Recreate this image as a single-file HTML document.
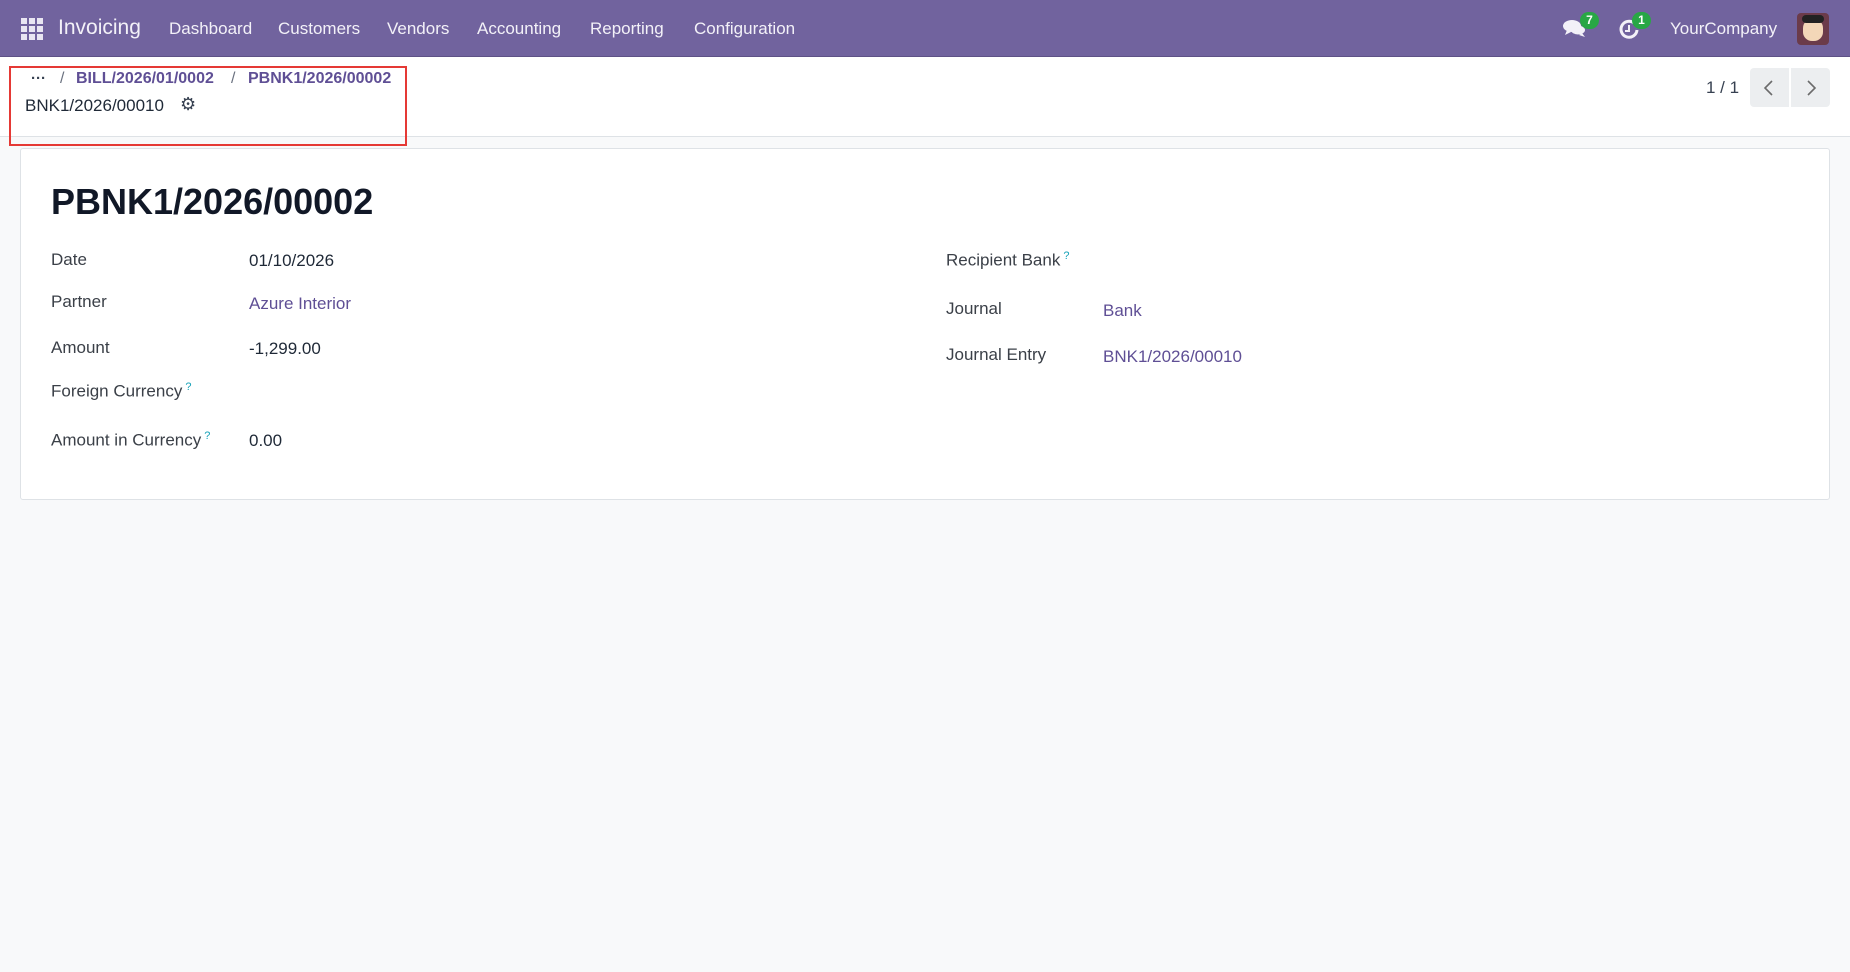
<!DOCTYPE html>
<html><head><meta charset="utf-8"><style>
*{box-sizing:border-box;margin:0;padding:0}
body{width:1850px;height:972px;background:#f8f9fa;font-family:"Liberation Sans",sans-serif;color:#374151;position:relative;overflow:hidden}
.nav{position:absolute;left:0;top:0;width:1850px;height:57px;background:#71639e;color:#fff;border-bottom:1px solid #5e5286}
.nav span{position:absolute;top:19px;font-size:17px;color:#f3f1f8}
.ctrl{position:absolute;left:0;top:57px;width:1850px;height:80px;background:#fff;border-bottom:1px solid #dee2e6}
.card{position:absolute;left:20px;top:148px;width:1810px;height:352px;background:#fff;border:1px solid #dee2e6;border-radius:3px}
.l{position:absolute;font-size:17px;color:#3b4048}
.v{position:absolute;font-size:17px;color:#1f2937}
.a{color:#5f4f95 !important}
sup{color:#17a2b8;font-size:11px;margin-left:3px}
.badge{position:absolute;background:#28a745;color:#fff;font-size:12px;font-weight:bold;border-radius:9px;width:19px;height:17px;text-align:center;line-height:17px}
</style></head><body>
<div class="nav">
 <svg style="position:absolute;left:21px;top:18px" width="22" height="22" viewBox="0 0 22 22" fill="#e9e6f2"><rect x="0" y="0" width="6" height="6"/><rect x="8" y="0" width="6" height="6"/><rect x="16" y="0" width="6" height="6"/><rect x="0" y="8" width="6" height="6"/><rect x="8" y="8" width="6" height="6"/><rect x="16" y="8" width="6" height="6"/><rect x="0" y="16" width="6" height="6"/><rect x="8" y="16" width="6" height="6"/><rect x="16" y="16" width="6" height="6"/></svg>
 <span style="left:58px;top:16px;font-size:21px">Invoicing</span>
 <span style="left:169px">Dashboard</span>
 <span style="left:278px">Customers</span>
 <span style="left:387px">Vendors</span>
 <span style="left:477px">Accounting</span>
 <span style="left:590px">Reporting</span>
 <span style="left:694px">Configuration</span>
 <svg style="position:absolute;left:1563px;top:18px" width="24" height="20" viewBox="0 0 24 20" fill="#f3f1f8"><ellipse cx="9" cy="8" rx="9" ry="6"/><path d="M4 12l-2 5 6-3z"/><ellipse cx="15" cy="12" rx="7" ry="4.5"/><path d="M19 15l3 4-6-2z"/></svg>
 <div class="badge" style="left:1580px;top:12px">7</div>
 <svg style="position:absolute;left:1618px;top:19px" width="22" height="22" viewBox="0 0 22 22" fill="none" stroke="#f3f1f8" stroke-width="3"><path d="M16 4A8 8 0 1 0 19 11"/><path d="M11 6v6h-4" stroke-width="2"/></svg>
 <div class="badge" style="left:1632px;top:12px">1</div>
 <span style="left:1670px">YourCompany</span>
 <div style="position:absolute;left:1797px;top:13px;width:32px;height:32px;border-radius:4px;background:#6b3b4a;overflow:hidden"><div style="position:absolute;left:6px;top:6px;width:20px;height:22px;border-radius:9px;background:#f3d7b8"></div><div style="position:absolute;left:5px;top:2px;width:22px;height:8px;background:#222;border-radius:5px"></div></div>
</div>
<div class="ctrl">
 <div style="position:absolute;left:9px;top:9px;width:398px;height:80px;border:2px solid #e53935"></div>
 <span style="position:absolute;left:31px;top:13px;font-size:15px;font-weight:bold;color:#374151">···</span>
 <span style="position:absolute;left:60px;top:13px;font-size:16px;color:#6b7280">/</span>
 <span class="a" style="position:absolute;left:76px;top:13px;font-size:16px;font-weight:bold">BILL/2026/01/0002</span>
 <span style="position:absolute;left:231px;top:13px;font-size:16px;color:#6b7280">/</span>
 <span class="a" style="position:absolute;left:248px;top:13px;font-size:16px;font-weight:bold">PBNK1/2026/00002</span>
 <span style="position:absolute;left:25px;top:39px;font-size:17px;color:#1f2937">BNK1/2026/00010</span>
 <span style="position:absolute;left:180px;top:37px;font-size:18px;color:#374151">⚙</span>
 <span style="position:absolute;left:1706px;top:21px;font-size:17px;color:#374151">1 / 1</span>
 <div style="position:absolute;left:1750px;top:11px;width:39px;height:39px;background:#eceef0;border-radius:4px 0 0 4px"><svg style="position:absolute;left:13px;top:12px" width="12" height="16" viewBox="0 0 12 16" fill="none" stroke="#6b6b6b" stroke-width="1.6"><path d="M9 1L2 8l7 7"/></svg></div>
 <div style="position:absolute;left:1791px;top:11px;width:39px;height:39px;background:#eceef0;border-radius:0 4px 4px 0"><svg style="position:absolute;left:14px;top:12px" width="12" height="16" viewBox="0 0 12 16" fill="none" stroke="#6b6b6b" stroke-width="1.6"><path d="M3 1l7 7-7 7"/></svg></div>
</div>
<div class="card">
 <div style="position:absolute;left:30px;top:32px;font-size:36px;font-weight:bold;color:#111827">PBNK1/2026/00002</div>
 <div class="l" style="left:30px;top:101px">Date</div><div class="v" style="left:228px;top:102px">01/10/2026</div>
 <div class="l" style="left:30px;top:143px">Partner</div><div class="v a" style="left:228px;top:145px">Azure Interior</div>
 <div class="l" style="left:30px;top:189px">Amount</div><div class="v" style="left:228px;top:190px">-1,299.00</div>
 <div class="l" style="left:30px;top:232px">Foreign Currency<sup>?</sup></div>
 <div class="l" style="left:30px;top:281px">Amount in Currency<sup>?</sup></div><div class="v" style="left:228px;top:282px">0.00</div>
 <div class="l" style="left:925px;top:101px">Recipient Bank<sup>?</sup></div>
 <div class="l" style="left:925px;top:150px">Journal</div><div class="v a" style="left:1082px;top:152px">Bank</div>
 <div class="l" style="left:925px;top:196px">Journal Entry</div><div class="v a" style="left:1082px;top:198px">BNK1/2026/00010</div>
</div>
</body></html>
